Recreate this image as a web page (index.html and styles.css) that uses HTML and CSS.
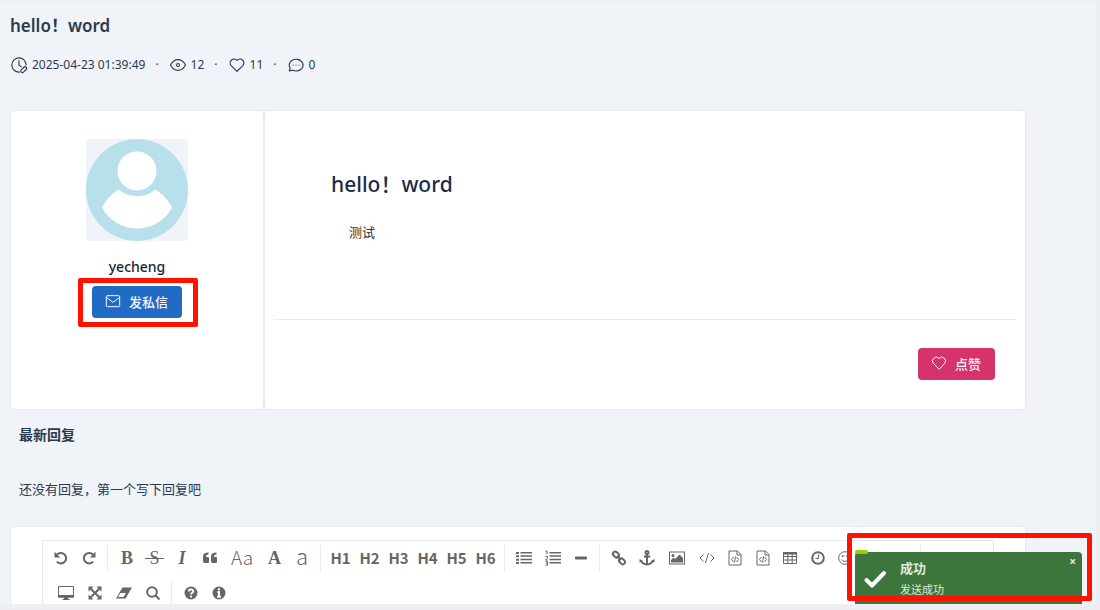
FILE: index.html
```
<!DOCTYPE html>
<html lang="zh-CN">

<head>
  <meta charset="UTF-8">
  <meta name="viewport" content="width=device-width, initial-scale=1.0">
  <title>hello！word</title>
  <link rel="stylesheet" href="styles.css">
</head>

<body>
  <div class="page">
    <header class="post-header">
      <h1>hello！word</h1>
      <div class="meta">
        <span class="meta-item">
          <svg class="line-icon" viewBox="0 0 24 24"><path d="M12.500 21.500A9.500 9.500 0 1 1 21.500 12"/><path d="M12 6.500V12l3 2.500"/><path d="M15 18.500l3.500-3.500a2 2 0 0 1 3 3L18 21.500a2 2 0 0 1-3-3z"/></svg>
          2025-04-23 01:39:49
        </span>
        <span class="dot">·</span>
        <span class="meta-item">
          <svg class="line-icon" viewBox="0 0 24 24"><path d="M2 12c5-9.500 15-9.500 20 0c-5 9.500-15 9.500-20 0z"/><circle cx="12" cy="12" r="2"/></svg>
          12
        </span>
        <span class="dot">·</span>
        <span class="meta-item">
          <svg class="line-icon" viewBox="0 0 24 24"><path d="M12 20.500l-7.800-7.800a5.200 5.200 0 0 1 7.800-6.900a5.200 5.200 0 0 1 7.800 6.900z"/></svg>
          11
        </span>
        <span class="dot">·</span>
        <span class="meta-item">
          <svg class="line-icon" viewBox="0 0 24 24"><path d="M3 20l1.300-3.900c-2.700-4-.9-8.400 2.700-10.500c4.500-2.500 10.300-1.200 13 2.600c2.200 3.500 1.300 7.500-1.800 9.800c-3.200 2.300-7.200 2.500-10.800 1z"/><path d="M8 12v.1M12 12v.1M16 12v.1"/></svg>
          0
        </span>
      </div>
    </header>

    <main>
      <section class="post">
        <aside class="card author">
          <svg class="avatar" viewBox="0 0 102 102">
            <circle cx="51" cy="51" r="51" fill="#b8e0ea"/>
            <circle cx="51" cy="32" r="19.500" fill="#fff"/>
            <path d="M33 50.500c9 9 27 9 36 0c7 4 13 10 17 18c-15 28-55 28-70 0c4-8 10-14 17-18z" fill="#fff"/>
          </svg>
          <h3>yecheng</h3>
          <div class="message">
            <button type="button" class="btn btn-primary">
              <svg class="line-icon" viewBox="0 0 24 24"><rect x="2" y="4" width="20" height="16.500" rx="1.500"/><path d="M2.500 7l9.500 7 9.500-7"/></svg>
              发私信
            </button>
            <div class="mark mark-message"></div>
          </div>
        </aside>

        <article class="card content">
          <div class="content-body">
            <h2>hello！word</h2>
            <p>测试</p>
          </div>
          <footer class="content-footer">
            <button type="button" class="btn btn-like">
              <svg class="line-icon" viewBox="0 0 24 24"><path d="M12 21l-8.500-8.500a5.600 5.600 0 0 1 8.500-7.300a5.600 5.600 0 0 1 8.500 7.300z"/></svg>
              点赞
            </button>
          </footer>
        </article>
      </section>

      <section class="replies">
        <h3>最新回复</h3>
        <p>还没有回复，第一个写下回复吧</p>
      </section>

      <section class="card editor-card">
        <div class="editor">
          <div class="toolbar">
            <button type="button" title="撤销"><svg viewBox="0 0 16 16"><path class="s2" d="M4 4.500a5.300 5.300 0 1 1-.2 7.200"/><path d="M1.500 1.800v5.700h5.700z"/></svg></button>
            <button type="button" title="重做"><svg viewBox="0 0 16 16"><path class="s2" d="M12 4.500a5.300 5.300 0 1 0 .2 7.200"/><path d="M14.500 1.800v5.700H8.800z"/></svg></button>
            <span class="sep"></span>
            <button type="button" class="serif" title="粗体">B</button>
            <button type="button" class="serif strike w27" title="删除线"><s>&nbsp;S&nbsp;</s></button>
            <button type="button" class="serif italic" title="斜体">I</button>
            <button type="button" class="w27" title="引用"><svg viewBox="0 0 16 16"><path d="M1 11V6.500C1 4 3 2.500 6.500 2.500v2c-1.800 0-2.500.8-2.500 2.500h2Q7 7 7 8v4q0 1-1 1H2.500Q1 13 1 11zM9 11V6.500c0-2.500 2-4 5.500-4v2C12.700 4.500 12 5.300 12 7h2q1 0 1 1v4q0 1-1 1h-3.500Q9 13 9 11z"/></svg></button>
            <button type="button" class="letter w38" title="单词首字母转成大写">Aa</button>
            <button type="button" class="serif w27" title="转成大写">A</button>
            <button type="button" class="letter lower" title="转成小写">a</button>
            <span class="sep"></span>
            <button type="button" class="heading">H1</button>
            <button type="button" class="heading">H2</button>
            <button type="button" class="heading">H3</button>
            <button type="button" class="heading">H4</button>
            <button type="button" class="heading">H5</button>
            <button type="button" class="heading">H6</button>
            <span class="sep"></span>
            <button type="button" title="无序列表"><svg viewBox="0 0 16 16"><path d="M0 2h3v2H0zM0 5.300h3v2H0zM0 8.700h3v2H0zM0 12h3v2H0zM4.500 2H16v1.500H4.500zM4.500 5.300H16v1.500H4.500zM4.500 8.700H16v1.500H4.500zM4.500 12H16v1.500H4.500z"/></svg></button>
            <button type="button" class="w29" title="有序列表"><svg viewBox="0 0 16 16"><path d="M4.500 2H16v1.500H4.500zM4.500 5.300H16v1.500H4.500zM4.500 8.700H16v1.500H4.500zM4.500 12H16v1.500H4.500z"/><path class="s1" d="M.5 1.500L2 .8V4.500M.5 6.500h2v1.500L.5 10h2.300M.5 11.500h2v3.700h-2M1 13.300h1.500"/></svg></button>
            <button type="button" title="横线"><svg viewBox="0 0 16 16"><rect x="2" y="6.500" width="12" height="3" rx="1"/></svg></button>
            <span class="sep"></span>
            <button type="button" title="链接"><svg viewBox="0 0 16 16"><rect class="s2" x="1.700" y="2.300" width="6.500" height="4.600" rx="2.300" transform="rotate(45 5 4.600)"/><rect class="s2" x="7.800" y="9" width="6.500" height="4.600" rx="2.300" transform="rotate(45 11 11.300)"/><path class="s2" d="M6 6l4 4"/></svg></button>
            <button type="button" title="引用链接"><svg viewBox="0 0 16 16"><circle class="s2" cx="8" cy="2.600" r="1.500"/><path class="s2" d="M8 4v10M4.800 6.500h6.400M2 10.500c1 2.800 3 3.800 6 4c3-.2 5-1.200 6-4"/><path d="M.5 12.500V9l3.500 2zM15.500 12.500V9L12 11z"/></svg></button>
            <button type="button" class="w31" title="添加图片"><svg viewBox="0 0 16 16"><rect class="s1" x=".5" y="2" width="15" height="12"/><circle cx="4" cy="5.500" r="1.500"/><path d="M2 12.500V10l2.500-2.500L6 9l4.500-4.500L14 8v4.500z"/></svg></button>
            <button type="button" class="w29" title="行内代码"><svg viewBox="0 0 16 16"><path class="s1" d="M4.500 4.500L1 8l3.500 3.500M11.500 4.500L15 8l-3.500 3.500M9.500 3l-3 10"/></svg></button>
            <button type="button" title="预格式文本"><svg viewBox="0 0 16 16"><path class="s1" d="M2 1h8.500L14 4.500V15H2zM10 1v4h4M6.500 7L4.500 9.500l2 2.500M9.500 7l2 2.500-2 2.500M8.500 6.500l-1 6"/></svg></button>
            <button type="button" class="w27" title="代码块"><svg viewBox="0 0 16 16"><path class="s1" d="M2 1h8.500L14 4.500V15H2zM10 1v4h4M6.500 7L4.500 9.500l2 2.500M9.500 7l2 2.500-2 2.500M8.500 6.500l-1 6"/></svg></button>
            <button type="button" title="添加表格"><svg viewBox="0 0 16 16"><path class="s1" d="M1.500 2.500h13v11h-13zM1.500 6.500h13M1.500 10h13M5.800 4v9.500M10.200 4v9.500"/><path d="M1 2h14v2.500H1z"/></svg></button>
            <button type="button" class="w27" title="日期时间"><svg viewBox="0 0 16 16"><circle class="s2" cx="8" cy="8" r="5.800"/><path class="s1" d="M8.500 4.500v4H5.500"/></svg></button>
            <button type="button" class="w27" title="表情"><svg viewBox="0 0 16 16"><circle class="s1" cx="8" cy="8" r="6.300"/><path class="s1" d="M4.800 9.500c1 2.500 5.400 2.500 6.400 0"/><circle cx="5.800" cy="6" r="1"/><circle cx="10.200" cy="6" r="1"/></svg></button>
            <span class="sep sep-far"></span>
          </div>
          <div class="toolbar">
            <button type="button" class="w38" title="预览"><svg viewBox="0 0 16 16"><path class="s1" d="M.5 1.500h15v10.500H.5z"/><path d="M0 10h16v2.500H0zM6 12h4v2h1.500v1h-7v-1H6z"/></svg></button>
            <button type="button" class="w20" title="全屏"><svg viewBox="0 0 16 16"><path class="s2" d="M3.500 3.500l9 9M12.500 3.500l-9 9"/><path d="M1.500 1.500h5l-5 5zM14.500 1.500v5l-5-5zM1.500 14.500v-5l5 5zM14.500 14.500h-5l5-5z"/></svg></button>
            <button type="button" class="w38" title="清空"><svg viewBox="0 0 16 16"><path d="M6.500 2.500H16L9.500 13.500H0zM2 12h5.500l2.500-4H4.500z" fill-rule="evenodd"/></svg></button>
            <button type="button" class="w20" title="搜索"><svg viewBox="0 0 16 16"><circle class="s2" cx="7" cy="7" r="4.800"/><path class="s2" d="M10.500 10.500l4 4"/></svg></button>
            <span class="sep sep-wide"></span>
            <button type="button" title="使用帮助"><svg viewBox="0 0 16 16"><circle cx="8" cy="8" r="6.500"/><path class="w2" d="M5.800 6.500c0-3 4.400-2.600 4.400-.2c0 1.400-2.200 1.500-2.200 3.200M8 10.800v1.700"/></svg></button>
            <button type="button" class="w27" title="关于"><svg viewBox="0 0 16 16"><circle cx="8" cy="8" r="6.500"/><path class="w2" d="M8 3.300v1.900M6.300 7H8v4.500M6 11.700h4"/></svg></button>
          </div>
        </div>
      </section>
    </main>

    <div class="toast" role="status">
      <span class="toast-progress"></span>
      <svg class="toast-icon" viewBox="0 0 24 20"><path d="M3.500 11l5.500 5.500L21 4"/></svg>
      <div class="toast-text">
        <strong>成功</strong>
        <p>发送成功</p>
      </div>
      <button type="button" class="toast-close" aria-label="关闭">×</button>
    </div>
    <div class="mark mark-toast"></div>
  </div>
</body>

</html>
```
FILE: styles.css
```
* {
  margin: 0;
  padding: 0;
  box-sizing: border-box;
}

:root {
  --background: #f0f3f8;
  --edge: #eeeff4;
  --border: #e8eaee;
  --text-color: #2c3a50;
  --dark: #1c2c48;
  --grey: #666666;
  --blue: #206bc4;
  --pink: #d6336c;
  --green: #3d763d;
  --red: #ff1200;

  font-family: "Noto Sans", "Noto Sans CJK SC", sans-serif;
}

body {
  background: var(--background);
  color: var(--text-color);
  font-size: 13px;
  line-height: 20px;
}

button {
  font-family: inherit;
  border: none;
  cursor: pointer;
}

.page {
  position: relative;
  height: 100vh;
  overflow: hidden;
  padding: 12px 70px 0 10px;
  border: solid var(--edge);
  border-width: 2px 4px 6px 0;
}

.line-icon {
  width: 16px;
  height: 16px;
  fill: none;
  stroke: currentColor;
  stroke-width: 1.5;
  stroke-linecap: round;
  stroke-linejoin: round;
}

/* header */
.post-header {
  padding-bottom: 35px;
}

.post-header h1 {
  font-size: 17px;
  font-weight: 600;
  line-height: 24px;
}

.meta {
  display: flex;
  align-items: center;
  gap: 10px;
  margin-top: 17px;
  font-size: 12px;
}

.meta-item {
  display: flex;
  align-items: center;
  gap: 4px;
}

.meta .line-icon {
  width: 18px;
  height: 18px;
}

/* post */
.card {
  background: #ffffff;
  border: 1px solid var(--border);
  border-radius: 4px;
}

.post {
  display: grid;
  grid-template-columns: 1fr 3fr;
  min-height: 300px;
}

.author {
  display: flex;
  flex-direction: column;
  align-items: center;
  padding-top: 28px;
}

.avatar {
  width: 102px;
  height: 102px;
  background: #f0f3f8;
  border-radius: 4px;
}

.author h3 {
  margin: 16px 0 9px;
  color: #182433;
  font-size: 14px;
  font-weight: 500;
}

.message {
  position: relative;
}

.btn {
  display: flex;
  align-items: center;
  gap: 8px;
  height: 32px;
  padding: 0 14px 2px 13px;
  border-radius: 4px;
  color: #f5f7fb;
  font-size: 13px;
  font-weight: 500;
}

.btn-primary {
  background: var(--blue);
}

.btn-like {
  background: var(--pink);
}

.content {
  display: flex;
  flex-direction: column;
  padding: 0 9px;
}

.content-body {
  flex: 1;
  padding: 59px 57px 0;
}

.content-body h2 {
  color: var(--dark);
  font-size: 21px;
  font-weight: 500;
  line-height: 28px;
}

.content-body p {
  margin: 24px 18px 0;
  color: #333333;
}

.content-footer {
  display: flex;
  justify-content: flex-end;
  padding: 28px 21px 29px;
  border-top: 1px solid var(--border);
}

/* replies */
.replies {
  padding: 15px 9px 27px;
}

.replies h3 {
  margin-bottom: 34px;
  font-size: 14px;
  font-weight: 700;
}

/* editor */
.editor-card {
  padding: 13px 31px;
}

.editor {
  min-height: 300px;
  border: 1px solid var(--border);
}

.toolbar {
  display: flex;
  align-items: center;
  height: 35px;
  padding-left: 4px;
}

.toolbar button {
  display: flex;
  flex: none;
  justify-content: center;
  align-items: center;
  width: 28px;
  height: 27px;
  padding-bottom: 2px;
  background: none;
  color: var(--grey);
  font-size: 16px;
}

.toolbar svg {
  width: 16px;
  height: 16px;
  fill: var(--grey);
}

.toolbar .s1 {
  fill: none;
  stroke: var(--grey);
  stroke-width: 1;
}

.toolbar .s2 {
  fill: none;
  stroke: var(--grey);
  stroke-width: 2;
}

.toolbar .w2 {
  fill: none;
  stroke: #ffffff;
  stroke-width: 2;
}

.toolbar .w20 {
  width: 20px;
}

.toolbar .w27 {
  width: 27px;
}

.toolbar .w29,
.toolbar .heading {
  width: 29px;
}

.toolbar .w31 {
  width: 31px;
}

.toolbar .w38 {
  width: 38px;
}

.toolbar .serif {
  padding-bottom: 0;
  font-family: "Liberation Serif", serif;
  font-size: 18px;
  font-weight: 700;
}

.toolbar .strike {
  font-weight: 400;
}

.toolbar .italic {
  font-style: italic;
}

.toolbar .letter {
  padding-bottom: 5px;
  font-family: "Noto Sans CJK SC", sans-serif;
  font-size: 19px;
  font-weight: 300;
}

.toolbar .lower {
  padding-bottom: 7px;
  font-size: 22px;
}

.toolbar .heading {
  padding-bottom: 3px;
  font-family: "Noto Sans CJK SC", sans-serif;
  font-size: 15px;
  font-weight: 700;
}

.sep {
  flex: none;
  width: 1px;
  height: 27px;
  margin: 0 5px 0 4px;
  background: var(--border);
}

.sep-far {
  margin-left: 62px;
}

.sep-wide {
  margin-left: 8px;
}

/* toast */
.toast {
  position: absolute;
  right: 14px;
  bottom: -10px;
  display: flex;
  gap: 13px;
  width: 227px;
  padding: 6px 6px 14px 8px;
  border-radius: 4px;
  background: var(--green);
  color: #dfeadd;
}

.toast-progress {
  position: absolute;
  top: -2px;
  left: 0;
  width: 13px;
  height: 4px;
  border-radius: 2px;
  background: #a3c90a;
}

.toast-icon {
  width: 24px;
  align-self: center;
  fill: none;
  stroke: #ffffff;
  stroke-width: 4;
  stroke-linecap: round;
  stroke-linejoin: round;
}

.toast-text {
  flex: 1;
}

.toast-text strong {
  font-size: 13px;
}

.toast-text p {
  margin-top: 2px;
  font-size: 11px;
}

.toast-close {
  align-self: flex-start;
  background: none;
  color: #dfeadd;
  font-size: 12px;
  line-height: 8px;
  font-weight: 700;
}

/* highlight frames */
.mark {
  position: absolute;
  border: 5px solid var(--red);
  border-radius: 2px;
  pointer-events: none;
}

.mark-message {
  inset: -8px -16px -9px -14px;
}

.mark-toast {
  right: 4px;
  bottom: 3px;
  width: 245px;
  height: 68px;
}
```
